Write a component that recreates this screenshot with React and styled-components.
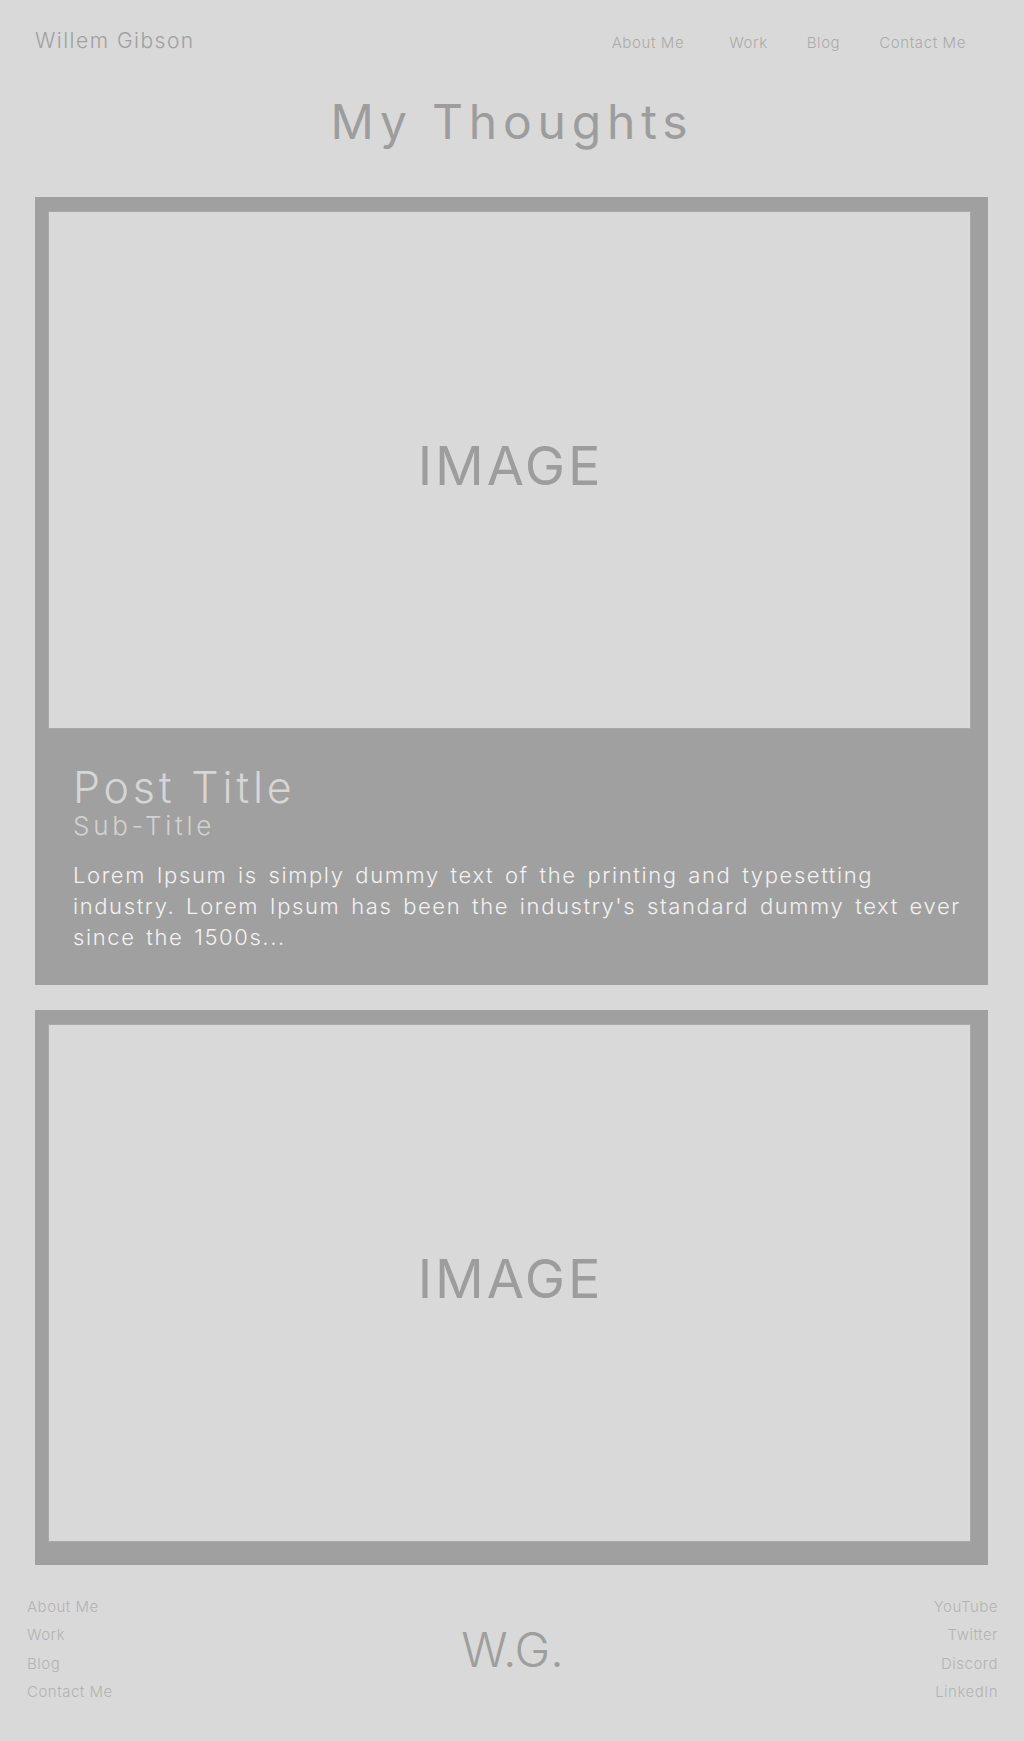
import React from "react";
import styled, { createGlobalStyle } from "styled-components";

const GlobalStyle = createGlobalStyle`
  body {
    margin: 0;
    background-color: #d9d9d9;
    font-family: Inter, "Liberation Sans", sans-serif;
  }
`;

const navLinks = ["About Me", "Work", "Blog", "Contact Me"];
const socialLinks = ["YouTube", "Twitter", "Discord", "LinkedIn"];

const posts = [
  {
    title: "Post Title",
    subtitle: "Sub-Title",
    text: "Lorem Ipsum is simply dummy text of the printing and typesetting industry. Lorem Ipsum has been the industry's standard dummy text ever since the 1500s...",
  },
  { title: null },
];

const App = () => {
  return (
    <>
      <GlobalStyle />
      <Page>
        <Header>
          <Logo>Willem Gibson</Logo>
          <Nav>
            {navLinks.map((link) => (
              <NavLink key={link}>{link}</NavLink>
            ))}
          </Nav>
        </Header>

        <PageTitle>My Thoughts</PageTitle>

        <PostList>
          {posts.map((post, i) => (
            <Card key={i} $bare={!post.title}>
              <ImageBox>IMAGE</ImageBox>
              {post.title && (
                <PostBody>
                  <PostTitle>{post.title}</PostTitle>
                  <SubTitle>{post.subtitle}</SubTitle>
                  <Excerpt>{post.text}</Excerpt>
                </PostBody>
              )}
            </Card>
          ))}
        </PostList>

        <Footer>
          <FooterLinks>
            {navLinks.map((link) => (
              <FooterLink key={link}>{link}</FooterLink>
            ))}
          </FooterLinks>
          <Monogram>W.G.</Monogram>
          <FooterLinks $right>
            {socialLinks.map((link) => (
              <FooterLink key={link}>{link}</FooterLink>
            ))}
          </FooterLinks>
        </Footer>
      </Page>
    </>
  );
};

export default App;

const Page = styled.div`
  width: 1024px;
  min-height: 1741px;
  background-color: #d9d9d9;
`;

const Header = styled.header`
  display: flex;
  justify-content: space-between;
  align-items: baseline;
  padding: 26px 58px 0 35px;
`;

const Logo = styled.div`
  font-size: 21px;
  line-height: 30px;
  font-weight: 300;
  letter-spacing: 1.5px;
  color: #a0a0a0;
`;

const Nav = styled.nav`
  display: flex;
  gap: 39px;
`;

const NavLink = styled.a`
  font-size: 15px;
  font-weight: 300;
  letter-spacing: 0.6px;
  color: #ababab;
  cursor: pointer;

  &:first-child {
    margin-right: 6px;
  }
`;

const PageTitle = styled.h1`
  margin: 0;
  padding: 36px 0 45px;
  text-align: center;
  font-size: 48px;
  line-height: 60px;
  font-weight: 400;
  letter-spacing: 5.8px;
  color: #9d9d9d;
`;

const PostList = styled.div`
  display: flex;
  flex-direction: column;
  gap: 25px;
  padding: 0 36px 0 35px;
`;

const Card = styled.article`
  background-color: #a0a0a0;
  padding: 14px 17px ${(props) => (props.$bare ? "23px" : "0")} 13px;
`;

const ImageBox = styled.div`
  display: flex;
  align-items: center;
  justify-content: center;
  height: 518px;
  padding-bottom: 9px;
  padding-left: 2px;
  background-color: #d9d9d9;
  border: 1px solid #a9a9a9;
  box-sizing: border-box;
  font-size: 54px;
  font-weight: 400;
  letter-spacing: 2.8px;
  color: #9d9d9d;
`;

const PostBody = styled.div`
  padding: 34px 0 32px 25px;
`;

const PostTitle = styled.h2`
  margin: 0;
  font-size: 43px;
  line-height: 48px;
  font-weight: 300;
  letter-spacing: 3.8px;
  color: #d6d6d6;
`;

const SubTitle = styled.h3`
  margin: 0;
  font-size: 26px;
  line-height: 30px;
  font-weight: 300;
  letter-spacing: 3.7px;
  color: #d2d2d2;
`;

const Excerpt = styled.p`
  margin: 19px 0 0;
  font-size: 22px;
  line-height: 31px;
  font-weight: 300;
  letter-spacing: 1.6px;
  word-spacing: 3px;
  color: #f2f2f2;
`;

const Footer = styled.footer`
  display: grid;
  grid-template-columns: 1fr auto 1fr;
  align-items: center;
  padding: 28px 26px 32px 27px;
`;

const FooterLinks = styled.div`
  display: flex;
  flex-direction: column;
  align-items: ${(props) => (props.$right ? "flex-end" : "flex-start")};
`;

const FooterLink = styled.a`
  font-size: 15px;
  line-height: 28.3px;
  font-weight: 300;
  letter-spacing: 0.5px;
  color: #b3b3b3;
  cursor: pointer;
`;

const Monogram = styled.div`
  font-size: 48px;
  font-weight: 300;
  color: #9e9e9e;
`;
